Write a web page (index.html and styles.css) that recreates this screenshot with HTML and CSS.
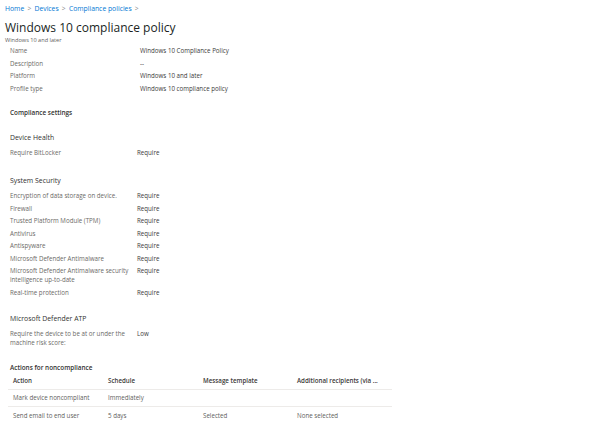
FILE: index.html
```html
<!DOCTYPE html>
<html>
<head>
<meta charset="utf-8">
<link rel="stylesheet" href="styles.css">
</head>
<body>
<div class="page">
  <nav class="crumbs">
    <a>Home</a><span class="sep">&gt;</span><a>Devices</a><span class="sep">&gt;</span><a>Compliance policies</a><span class="sep">&gt;</span>
  </nav>
  <h1 class="title">Windows 10 compliance policy</h1>
  <div class="subtitle">Windows 10 and later</div>

  <div class="props">
    <div class="plabel">Name</div><div class="pvalue">Windows 10 Compliance Policy</div>
    <div class="plabel">Description</div><div class="pvalue">--</div>
    <div class="plabel">Platform</div><div class="pvalue">Windows 10 and later</div>
    <div class="plabel">Profile type</div><div class="pvalue">Windows 10 compliance policy</div>
  </div>

  <div class="section-title">Compliance settings</div>

  <div class="group-title gh1">Device Health</div>
  <div class="settings">
    <div class="slabel">Require BitLocker</div><div class="svalue">Require</div>
  </div>

  <div class="group-title gh2">System Security</div>
  <div class="settings">
    <div class="slabel">Encryption of data storage on device.</div><div class="svalue">Require</div>
    <div class="slabel">Firewall</div><div class="svalue">Require</div>
    <div class="slabel">Trusted Platform Module (TPM)</div><div class="svalue">Require</div>
    <div class="slabel">Antivirus</div><div class="svalue">Require</div>
    <div class="slabel">Antispyware</div><div class="svalue">Require</div>
    <div class="slabel">Microsoft Defender Antimalware</div><div class="svalue">Require</div>
    <div class="slabel">Microsoft Defender Antimalware security intelligence up-to-date</div><div class="svalue">Require</div>
    <div class="slabel">Real-time protection</div><div class="svalue">Require</div>
  </div>

  <div class="group-title gh3">Microsoft Defender ATP</div>
  <div class="settings">
    <div class="slabel">Require the device to be at or under the machine risk score:</div><div class="svalue">Low</div>
  </div>

  <div class="section-title actions-title">Actions for noncompliance</div>
  <div class="table">
    <div class="trow thead">
      <div class="cell">Action</div><div class="cell">Schedule</div><div class="cell">Message template</div><div class="cell">Additional recipients (via ...</div>
    </div>
    <div class="trow">
      <div class="cell">Mark device noncompliant</div><div class="cell">Immediately</div><div class="cell"></div><div class="cell"></div>
    </div>
    <div class="trow last">
      <div class="cell">Send email to end user</div><div class="cell">5 days</div><div class="cell">Selected</div><div class="cell">None selected</div>
    </div>
  </div>
</div>
</body>
</html>
```

FILE: styles.css
```css
html, body {
  margin: 0;
  padding: 0;
  background: #ffffff;
}
body {
  font-family: "Open Sans", "Noto Sans", "Liberation Sans", sans-serif;
  color: #323130;
  font-size: 6.2px;
}
.page {
  padding: 4px 5px 0 5px;
}
.crumbs {
  font-size: 6.8px;
  line-height: 10px;
  color: #0078d4;
  height: 10px;
}
.crumbs .sep {
  color: #8a8886;
  margin: 0 3.2px;
}
.title {
  margin: 4px 0 0 0;
  font-size: 12px;
  line-height: 19px;
  font-weight: 500;
  color: #201f1e;
}
.subtitle {
  font-size: 5.6px;
  line-height: 8px;
  color: #605e5c;
  margin-top: -1px;
}
.props {
  display: grid;
  grid-template-columns: 130px 1fr;
  padding-left: 5px;
  margin-top: 1px;
}
.plabel, .pvalue {
  line-height: 12.5px;
}
.plabel { color: #6b6966; }
.pvalue { color: #3b3a39; }

.section-title {
  font-weight: 600;
  font-size: 6.4px;
  line-height: 10px;
  color: #323130;
  padding-left: 5px;
  margin-top: 13px;
}
.group-title {
  font-size: 6.9px;
  line-height: 10px;
  color: #323130;
  padding-left: 5px;
}
.gh1 { margin-top: 15px; }
.gh2 { margin-top: 17px; }
.gh3 { margin-top: 15px; }
.settings {
  display: grid;
  grid-template-columns: 127px 1fr;
  padding-left: 5px;
  margin-top: 3.5px;
}
.slabel, .svalue {
  line-height: 9px;
  padding: 1.75px 0;
}
.slabel { color: #6b6966; padding-right: 2px; }
.svalue { color: #3b3a39; }

.actions-title {
  margin-top: 14px;
}
.table {
  margin-left: 3px;
  width: 384px;
  margin-top: 0;
}
.trow {
  display: grid;
  grid-template-columns: 95px 95px 94px 1fr;
  border-bottom: 1px solid #edebe9;
  height: 17px;
  align-items: center;
  box-sizing: border-box;
}
.trow.last { border-bottom: none; }
.cell {
  padding-left: 5px;
  line-height: 9px;
  white-space: nowrap;
  color: #3b3a39;
}
.thead .cell {
  font-weight: 600;
}
.trow:not(.thead) .cell { color: #605e5c; }
```
